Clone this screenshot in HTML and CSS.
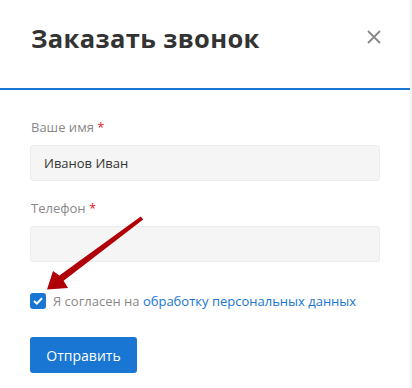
FILE: index.html
```html
<!DOCTYPE html>
<html lang="ru">
<head>
<meta charset="utf-8">
<link rel="stylesheet" href="styles.css">
</head>
<body>
<div class="modal">
  <div class="modal-header">
    <h1 class="modal-title">Заказать звонок</h1>
    <button class="close" aria-label="Закрыть">
      <svg width="16" height="16" viewBox="0 0 16 16"><path d="M2 2L14 14M14 2L2 14" stroke="#888" stroke-width="1.8" fill="none"/></svg>
    </button>
  </div>
  <form class="form">
    <div class="field">
      <label class="label">Ваше имя <span class="req">*</span></label>
      <div class="input">Иванов Иван</div>
    </div>
    <div class="field">
      <label class="label">Телефон <span class="req">*</span></label>
      <div class="input"></div>
    </div>
    <div class="agree">
      <span class="checkbox"><svg width="10" height="8" viewBox="0 0 10 8"><path d="M1 4L3.8 6.6L9 1.2" stroke="#fff" stroke-width="2" fill="none"/></svg></span>
      <span class="agree-text">Я согласен на <a class="link">обработку персональных данных</a></span>
    </div>
    <button class="submit" type="button">Отправить</button>
  </form>
  <svg class="arrow" width="412" height="388" viewBox="0 0 412 388">
    <polygon points="140.8,216.4 59.4,275.4 53,271 47,289.5 68,288 63.6,280.8 143.2,219.6" fill="#b00008"/>
  </svg>
</div>
</body>
</html>
```
FILE: styles.css
```css
html, body {
  margin: 0;
  padding: 0;
}
body {
  background: #f2f2f2;
  font-family: "Open Sans", "Noto Sans", sans-serif;
  width: 412px;
  height: 388px;
  overflow: hidden;
}
.modal {
  position: relative;
  width: 410px;
  height: 388px;
  background: #fff;
}
.modal-header {
  height: 90px;
  border-bottom: 2px solid #1976d2;
  display: flex;
  align-items: flex-start;
  justify-content: space-between;
  padding: 0 28px 0 31px;
  box-sizing: border-box;
}
.modal-title {
  margin: 21px 0 0;
  font-size: 25.5px;
  line-height: 34px;
  font-weight: 700;
  color: #333;
  letter-spacing: 0.35px;
}
.close {
  margin-top: 29px;
  padding: 0;
  border: 0;
  background: none;
  width: 16px;
  height: 16px;
  display: block;
}
.close svg { display: block; }
.form {
  padding: 0 30px;
  display: flex;
  flex-direction: column;
}
.field {
  display: flex;
  flex-direction: column;
}
.field:first-child { margin-top: 28px; }
.field + .field { margin-top: 18px; }
.label {
  font-size: 13px;
  line-height: 18px;
  color: #888;
  margin-left: 1px;
  margin-bottom: 9px;
}
.req { color: #e02020; }
.input {
  height: 36px;
  box-sizing: border-box;
  background: #f5f5f5;
  border: 1px solid #ececec;
  border-radius: 3px;
  font-size: 13px;
  line-height: 34px;
  color: #333;
  padding: 0 13px;
}
.agree {
  margin-top: 30px;
  display: flex;
  align-items: center;
  gap: 7px;
}
.checkbox {
  width: 16px;
  height: 16px;
  border-radius: 3px;
  background: #1976d2;
  display: flex;
  align-items: center;
  justify-content: center;
}
.checkbox svg { display: block; }
.agree-text {
  font-size: 13px;
  line-height: 18px;
  color: #888;
}
.link { color: #1976d2; text-decoration: none; }
.submit {
  margin-top: 27px;
  align-self: flex-start;
  width: 107px;
  height: 36px;
  border: 0;
  border-radius: 3px;
  background: #1976d2;
  color: #fff;
  font-family: "Open Sans", "Noto Sans", sans-serif;
  font-size: 14px;
  padding: 0;
}
.arrow {
  position: absolute;
  left: 0;
  top: 0;
  pointer-events: none;
}
```
